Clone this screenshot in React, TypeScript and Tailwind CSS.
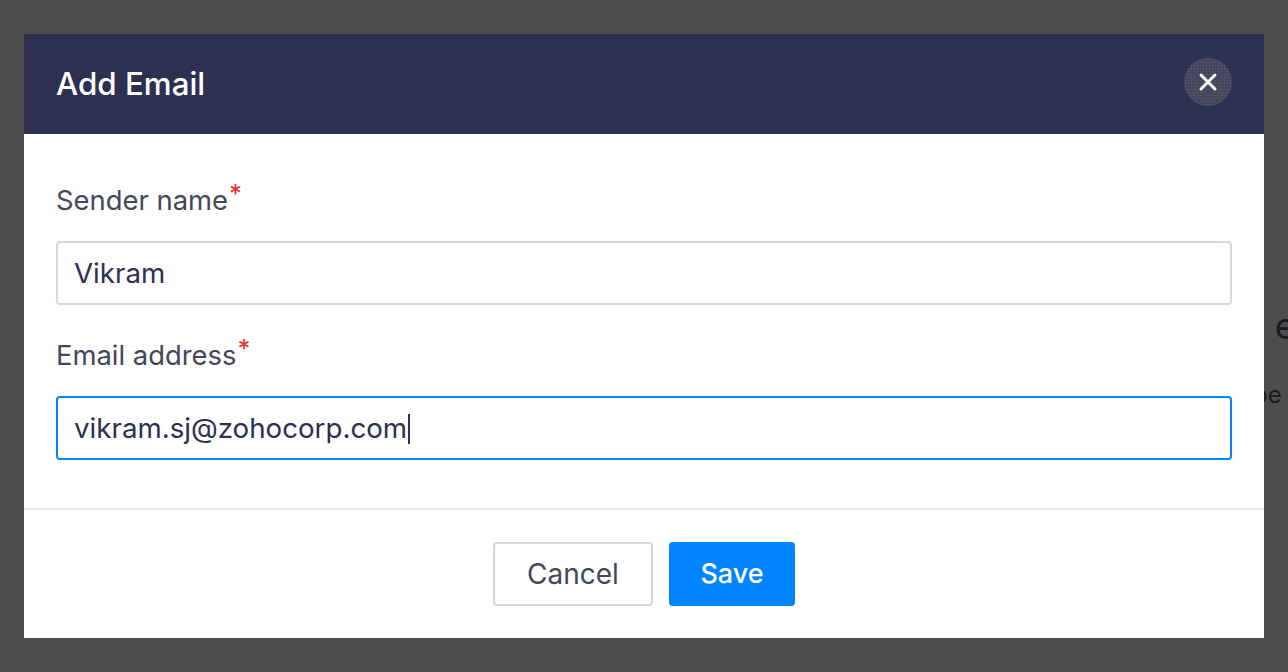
import { X } from 'lucide-react';

const Label = ({ text }: { text: string }) => (
  <div className="h-[34px] text-[27.4px] leading-[34px] text-[#44475a]">
    {text}
    <span className="relative -top-[7px] ml-[1px] text-[25px] font-medium text-[#e53935]">*</span>
  </div>
);

export default function App() {
  return (
    <div className="relative h-[672px] w-[1288px] overflow-hidden bg-[#4d4d4d] px-[24px] pt-[34px] font-['Inter',sans-serif]">
      {/* page behind the overlay, the modal covers most of it */}
      <div className="absolute left-[1251px] top-[306px] whitespace-nowrap text-[36px] leading-[40px] text-[#1a1a1f]">r e</div>
      <div className="absolute left-[1253px] top-[381px] whitespace-nowrap text-[24px] leading-[28px] text-[#1a1a1f]">pe</div>

      <div className="relative flex h-[604px] w-[1240px] flex-col bg-white">
        <div className="flex h-[100px] items-center justify-between bg-[#2d3050] pl-[32px] pr-[32px]">
          <h1 className="text-[31.3px] font-medium text-white">Add Email</h1>
          <button className="mb-[4px] flex h-[48px] w-[48px] items-center justify-center rounded-full bg-[#50515f] bg-[radial-gradient(#5c5c66_1px,#464860_1px)] bg-[length:3px_3px] text-white">
            <X size={28} strokeWidth={2.5} />
          </button>
        </div>

        <div className="flex-1 px-[32px] pt-[49px]">
          <Label text="Sender name" />
          <div className="mt-[24px] flex h-[64px] items-center rounded-[4px] border-2 border-[#d5d8de] px-[16px] pt-[1px] text-[27.7px] text-[#2d3050]">
            Vikram
          </div>
          <div className="mt-[33px]">
            <Label text="Email address" />
          </div>
          <div className="mt-[24px] flex h-[64px] items-center rounded-[4px] border-2 border-[#0084ff] px-[16px] pt-[1px] text-[27.7px] text-[#2d3050]">
            vikram.sj@zohocorp.com
            <span className="ml-[1px] h-[30px] w-[2px] bg-[#2d3050]" />
          </div>
        </div>

        <div className="flex h-[130px] items-start justify-center gap-[16px] border-t-2 border-[#e4e6ea] pt-[32px]">
          <button className="h-[64px] w-[160px] rounded-[4px] border-2 border-[#d3d6dd] text-[28px] text-[#44475a]">
            Cancel
          </button>
          <button className="h-[64px] w-[126px] rounded-[4px] bg-[#0084ff] pt-[1px] text-[27px] font-medium text-white">
            Save
          </button>
        </div>
      </div>
    </div>
  );
}
